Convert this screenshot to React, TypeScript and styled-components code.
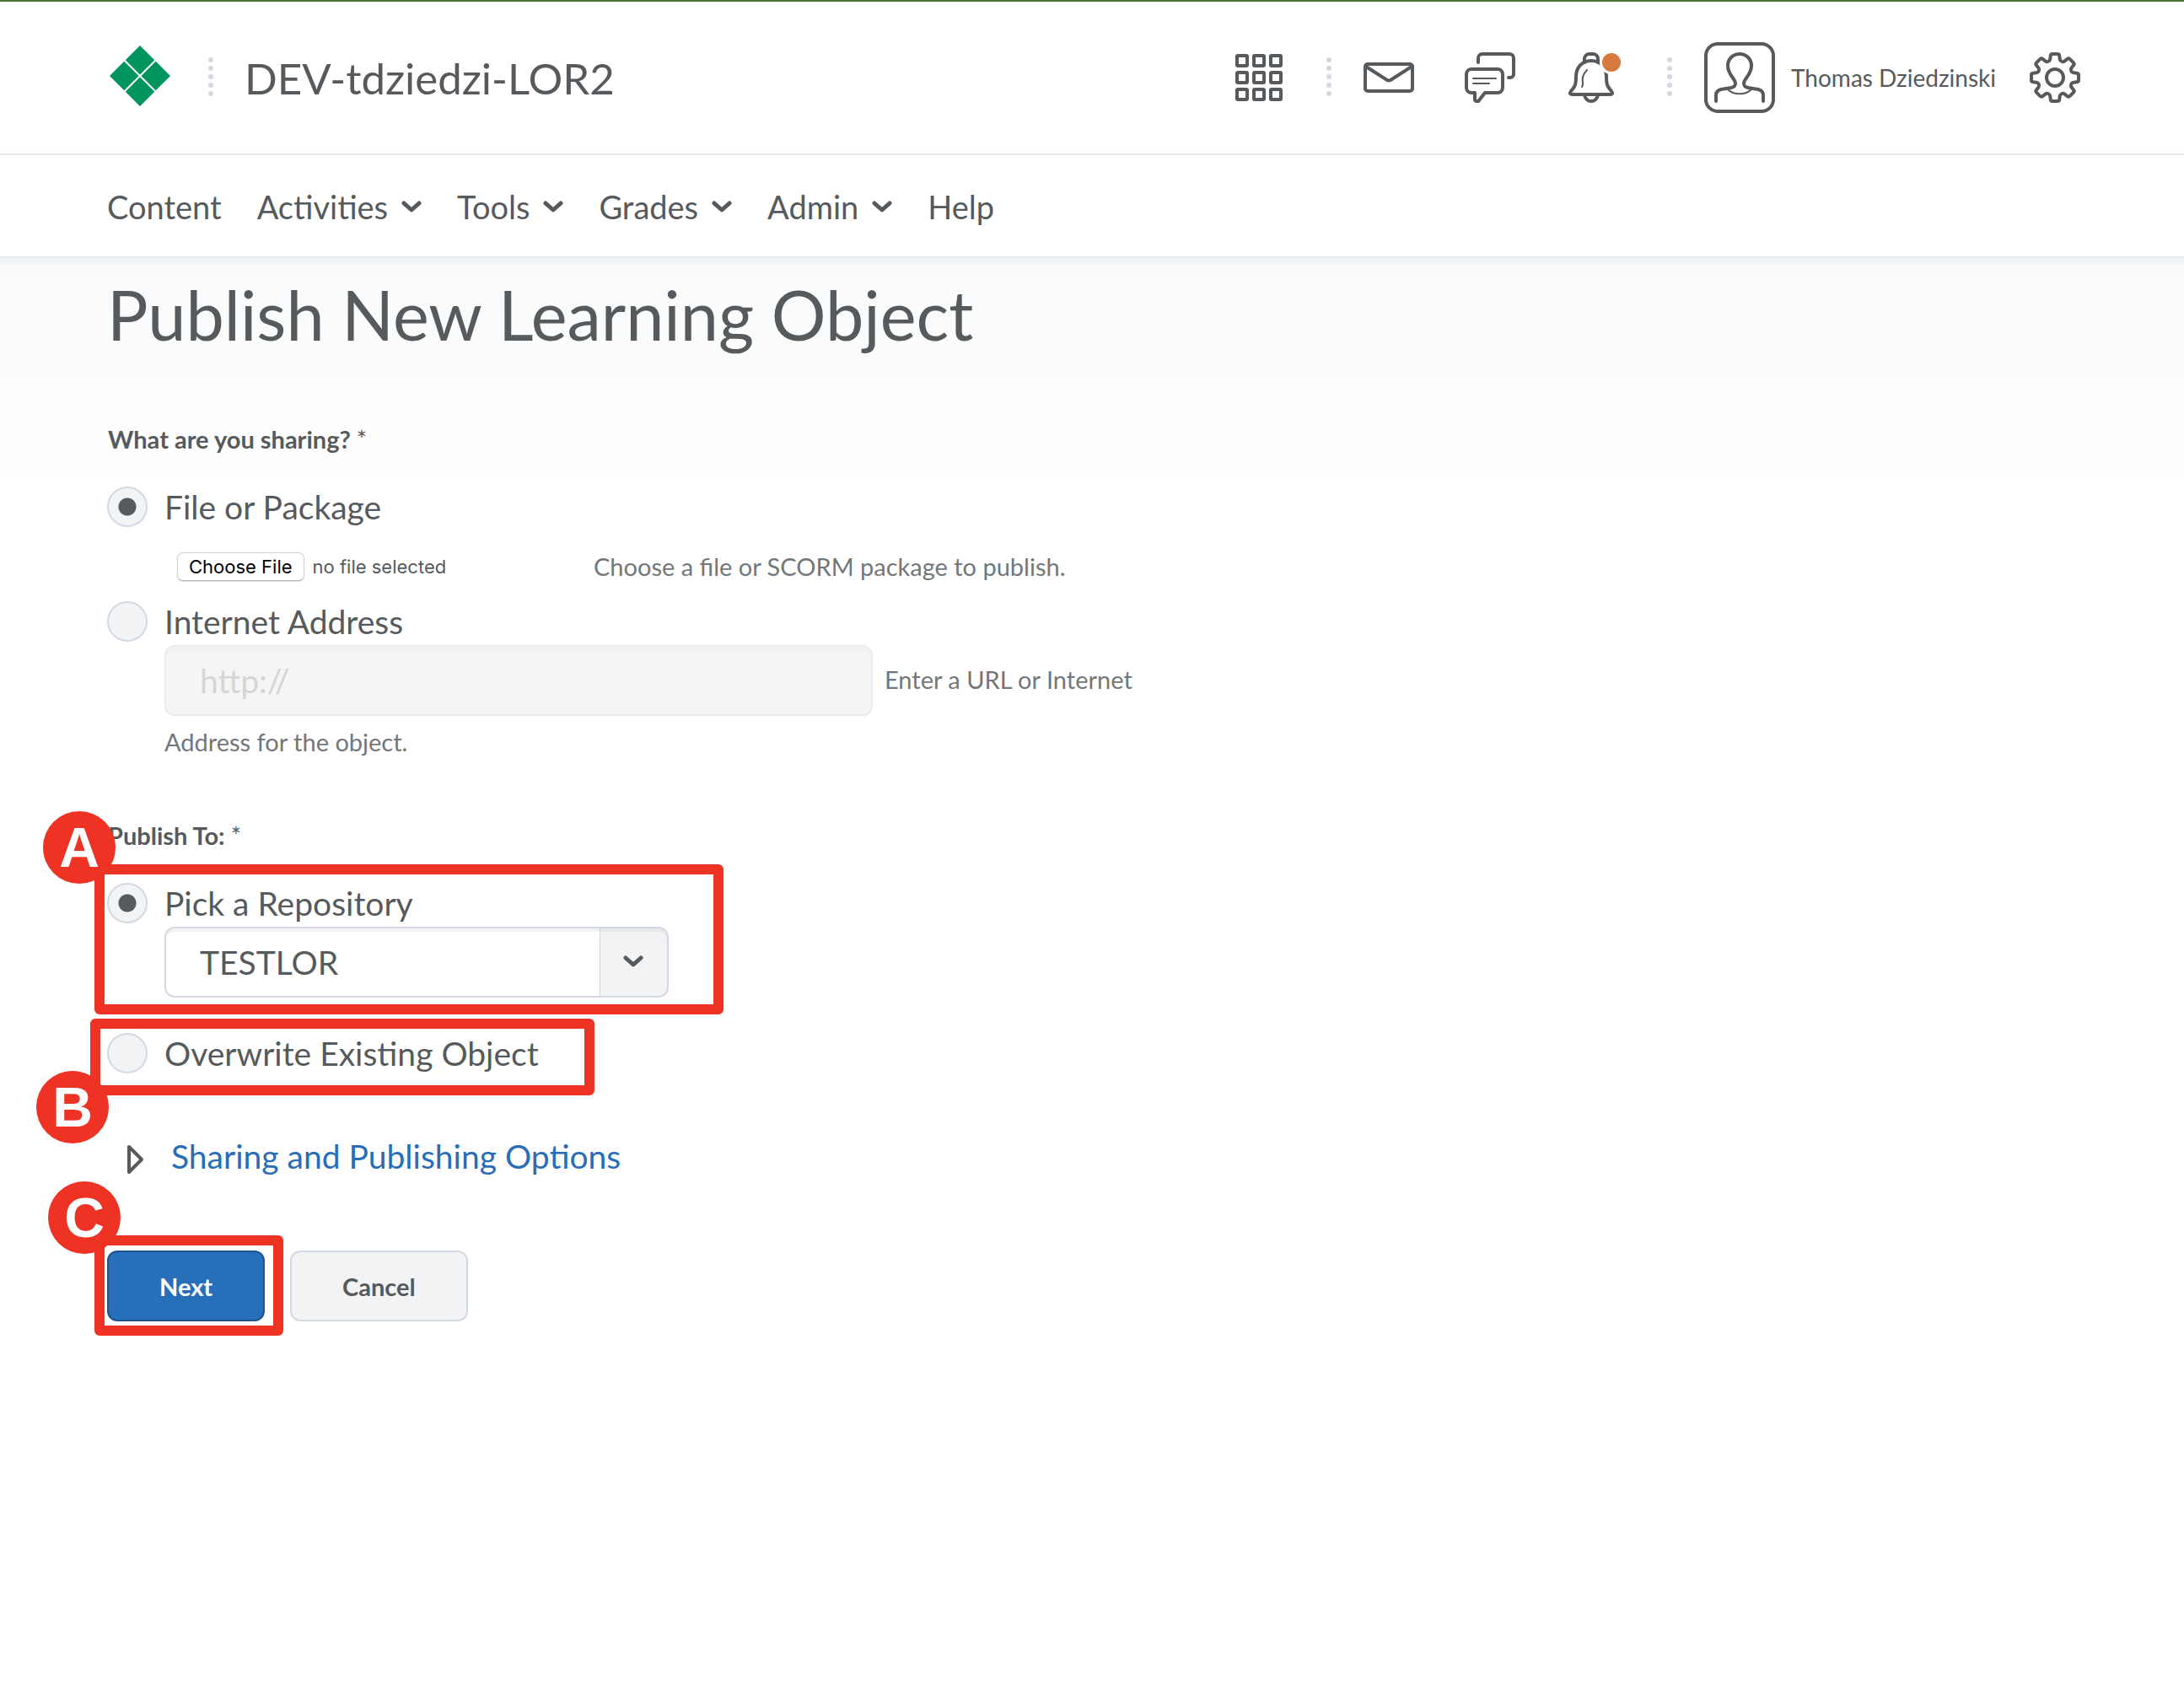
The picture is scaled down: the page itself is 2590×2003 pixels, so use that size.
import React, { useState } from 'react';
import styled, { createGlobalStyle } from 'styled-components';

const color = {
  text: '#565a5c',
  muted: '#72777a',
  line: '#e6eaee',
  border: '#d3d9e3',
  fill: '#f2f3f5',
  blue: '#276db8',
  red: '#ee3224',
};

const Global = createGlobalStyle`
  *, *::before, *::after { box-sizing: border-box; }
  body {
    margin: 0;
    background: #fff;
    color: ${color.text};
    font-family: Lato, "Open Sans", sans-serif;
    font-size: 39px;
  }
  button, input, select { font: inherit; color: inherit; }
  a { color: inherit; text-decoration: none; }
  svg { display: block; flex: none; }
`;

const Page = styled.div`
  min-height: 100vh;
  border-top: 2px solid #46762f;
`;

const Header = styled.header`
  display: flex;
  align-items: center;
  height: 182px;
  padding: 0 123px 0 130px;
  border-bottom: 2px solid ${color.line};
`;

const LogoLink = styled.a`
  display: flex;
  padding-bottom: 4px;
`;

const Dots = styled.span<{ $before: number; $after: number }>`
  display: flex;
  flex-direction: column;
  gap: 4px;
  padding-bottom: 2px;
  margin-left: ${p => p.$before}px;
  margin-right: ${p => p.$after}px;
`;

const Dot = styled.i`
  width: 6px;
  height: 6px;
  border-radius: 50%;
  background: ${color.border};
`;

const SiteName = styled.a`
  padding-top: 2px;
  font-size: 51px;
  line-height: 60px;
`;

const Tools = styled.div`
  display: flex;
  align-items: center;
  margin-left: auto;
`;

const IconGroup = styled.div`
  display: flex;
  gap: 60px;
`;

const IconButton = styled.button`
  display: flex;
  padding: 0;
  border: 0;
  background: none;
`;

const Profile = styled.button`
  display: flex;
  align-items: center;
  gap: 19px;
  margin-right: 40px;
  padding: 0;
  border: 0;
  background: none;
  font-size: 28px;
`;

const Nav = styled.nav`
  display: flex;
  align-items: center;
  gap: 42px;
  height: 122px;
  padding: 2px 127px 0;
  border-bottom: 2px solid ${color.line};
  font-size: 38px;
  line-height: 48px;
`;

const NavItem = styled.a`
  display: flex;
  align-items: center;
  gap: 16px;
`;

const Main = styled.main`
  padding: 8px 127px 80px;
  background: linear-gradient(#f3f4f6 8px, #f9fafb 8px, #fff 300px);
`;

const Title = styled.h1`
  margin: 0 0 69px;
  font-size: 81px;
  line-height: 118px;
  font-weight: 400;
`;

const Group = styled.fieldset`
  min-width: 0;
  margin: 0 0 64px;
  padding: 0;
  border: 0;
`;

const Legend = styled.legend`
  margin-bottom: 36px;
  padding: 0 1px;
  font-size: 29px;
  line-height: 40px;
  font-weight: 700;
`;

const Required = styled.span`
  font-weight: 400;
`;

const RadioLabel = styled.label`
  display: flex;
  align-items: center;
  gap: 20px;
  line-height: 48px;
`;

const Radio = styled.input`
  appearance: none;
  width: 48px;
  height: 48px;
  margin: 0;
  border: 2px solid ${color.border};
  border-radius: 50%;
  background: ${color.fill};
  &:checked {
    background: radial-gradient(circle, ${color.text} 10px, ${color.fill} 11px);
  }
`;

const Indent = styled.div`
  max-width: 1268px;
  padding-left: 68px;
`;

const FileRow = styled(Indent)`
  display: flex;
  align-items: center;
  height: 88px;
  padding-top: 4px;
`;

const FileField = styled.div`
  display: flex;
  align-items: center;
  gap: 10px;
  width: 509px;
  padding-left: 15px;
  padding-top: 2px;
  font-family: Inter, Roboto, sans-serif;
  font-size: 22px;
`;

const HiddenFile = styled.input`
  position: absolute;
  width: 1px;
  height: 1px;
  opacity: 0;
`;

const FileButton = styled.label`
  padding: 0 13px;
  border: 1px solid #d0d0d0;
  border-bottom-color: #b4b4b4;
  border-radius: 7px;
  background: #fff;
  box-shadow: 0 1px 1px rgba(0, 0, 0, 0.12);
  color: #000;
  line-height: 32px;
`;

const Hint = styled.label`
  color: ${color.muted};
  font-size: 29px;
`;

const UrlRow = styled(Indent)`
  padding-top: 4px;
  line-height: 54px;
`;

const UrlInput = styled.input`
  width: 840px;
  height: 84px;
  margin-right: 14px;
  padding: 0 40px;
  vertical-align: middle;
  border: 2px solid #e8ecf0;
  border-radius: 12px;
  background: #f6f5f3;
  box-shadow: inset 0 4px 0 #f1f1f0;
  &::placeholder { color: #d3d6d8; opacity: 1; }
`;

const Marked = styled.div`
  position: relative;
  & + & { margin-top: 42px; }
`;

const SelectRow = styled(Indent)`
  padding-top: 4px;
`;

const SelectBox = styled.div`
  position: relative;
  width: 598px;
  svg {
    position: absolute;
    right: 30px;
    top: 34px;
    pointer-events: none;
  }
`;

const Select = styled.select`
  display: block;
  appearance: none;
  width: 100%;
  height: 84px;
  padding: 0 100px 0 40px;
  border: 2px solid ${color.border};
  border-radius: 12px;
  background: linear-gradient(to left, ${color.fill} 79px, ${color.border} 79px, ${color.border} 80px, #fff 80px);
  box-shadow: inset 0 4px 0 rgba(86, 90, 92, 0.08);
`;

const Frame = styled.span<{ $left: number; $top: number; $width: number; $height: number }>`
  position: absolute;
  left: ${p => p.$left}px;
  top: ${p => p.$top}px;
  width: ${p => p.$width}px;
  height: ${p => p.$height}px;
  border: 12px solid ${color.red};
  border-radius: 6px;
  pointer-events: none;
`;

const Badge = styled.span<{ $left: number; $top: number }>`
  position: absolute;
  left: ${p => p.$left}px;
  top: ${p => p.$top}px;
  display: flex;
  align-items: center;
  justify-content: center;
  width: 86px;
  height: 86px;
  border-radius: 50%;
  background: ${color.red};
  color: #fff;
  font: 700 66px "Liberation Sans", Arial, sans-serif;
`;

const OptionsLink = styled.a`
  display: inline-flex;
  align-items: center;
  gap: 32px;
  margin: 10px 0 88px;
  padding-left: 24px;
  color: ${color.blue};
  line-height: 48px;
  svg { margin-top: 8px; }
`;

const Actions = styled.div`
  position: relative;
  display: flex;
  gap: 30px;
`;

const Button = styled.button<{ $primary?: boolean }>`
  height: 84px;
  padding: 0 60px;
  border: 2px solid ${p => (p.$primary ? '#1c5590' : color.border)};
  border-radius: 12px;
  background: ${p => (p.$primary ? '#286fb9' : color.fill)};
  color: ${p => (p.$primary ? '#fff' : color.text)};
  font-size: 29px;
  font-weight: 700;
`;

const line = {
  fill: 'none',
  stroke: color.text,
  strokeWidth: 4,
  strokeLinecap: 'round' as const,
  strokeLinejoin: 'round' as const,
};

const Separator = ({ before, after }: { before: number; after: number }) => (
  <Dots $before={before} $after={after}>
    <Dot /><Dot /><Dot /><Dot /><Dot />
  </Dots>
);

const Logo = () => (
  <svg width="72" height="72" viewBox="0 0 72 72">
    <path d="M36 0 72 36 36 72 0 36z" fill="#00955e" />
    <path d="M17 17 55 55M55 17 17 55" stroke="#fff" strokeWidth="2" />
  </svg>
);

const Chevron = () => (
  <svg width="24" height="14" viewBox="0 0 24 14" {...line} strokeWidth={5}>
    <path d="M3 3l9 8 9-8" />
  </svg>
);

const GridIcon = () => (
  <svg width="60" height="60" viewBox="0 0 60 60" {...line}>
    {[4, 24, 44].map(y => [4, 24, 44].map(x => (
      <rect key={`${x}-${y}`} x={x} y={y} width="12" height="12" rx="1" />
    )))}
  </svg>
);

const MailIcon = () => (
  <svg width="60" height="60" viewBox="0 0 60 60" {...line}>
    <rect x="2" y="14" width="56" height="32" rx="3" />
    <path d="M3 17 28 33q2 1 4 0L57 17" />
  </svg>
);

const ChatIcon = () => (
  <svg width="60" height="60" viewBox="0 0 60 60" {...line}>
    <path d="M16 12V7a5 5 0 0 1 5-5h32a5 5 0 0 1 5 5v19a4 4 0 0 1-4 4h-2" />
    <path d="M8 20h31a6 6 0 0 1 6 6v16a6 6 0 0 1-6 6H24l-7 9c-1 2-5 1-5-1v-8H8a6 6 0 0 1-6-6V26a6 6 0 0 1 6-6z" />
    <path d="M10 31h27M10 37h19" strokeWidth="2" />
  </svg>
);

const BellIcon = () => (
  <svg width="60" height="60" viewBox="0 0 60 60" overflow="visible" {...line}>
    <path d="M22 12V8a6 6 0 0 1 6-6h4a6 6 0 0 1 6 6v4" />
    <path d="M30 10C19 10 12 18 12 29c0 11-2 12-6 17-2 3-1 4 1 4h46c2 0 3-1 1-4-4-5-6-6-6-17 0-11-7-19-18-19z" />
    <path d="M25 21c-5 5-6 10-5 15 0 2 0 4-1 5" strokeWidth="2" />
    <path d="M22 51c1 4 4 7 8 7s7-3 8-7" />
    <circle cx="54" cy="12" r="14" fill="#fff" stroke="none" />
    <circle cx="54" cy="12" r="11" fill="#d87a40" stroke="none" />
  </svg>
);

const AvatarIcon = () => (
  <svg width="84" height="84" viewBox="0 0 84 84" {...line}>
    <rect x="2" y="2" width="80" height="80" rx="14" />
    <path d="M14 70v-7c0-4 2-6 6-7l12-2c4-1 5-2 5-5 0-6-9-10-9-21 0-8 6-14 14-14s14 6 14 14c0 11-9 15-9 21 0 3 1 4 5 5l12 2c4 1 6 3 6 7v7" />
    <path d="M28 56c7 7 21 7 28 0" strokeWidth="2" />
  </svg>
);

const gearPath = () => {
  const tooth = [[-6, -20], [-5, -28], [5, -28], [6, -20]];
  const points = Array.from({ length: 8 }).flatMap((_, i) => {
    const a = (i * Math.PI) / 4;
    return tooth.map(([x, y]) => [
      30 + x * Math.cos(a) - y * Math.sin(a),
      30 + x * Math.sin(a) + y * Math.cos(a),
    ]);
  });
  const toward = (from: number[], to: number[]) => {
    const d = Math.hypot(to[0] - from[0], to[1] - from[1]);
    const t = Math.min(2, d / 2) / d;
    return `${from[0] + (to[0] - from[0]) * t} ${from[1] + (to[1] - from[1]) * t}`;
  };
  return points
    .map((p, i) => {
      const prev = points[(i + points.length - 1) % points.length];
      const next = points[(i + 1) % points.length];
      return `${i ? 'L' : 'M'}${toward(p, prev)}Q${p[0]} ${p[1]} ${toward(p, next)}`;
    })
    .join('') + 'z';
};

const GearIcon = () => (
  <svg width="60" height="60" viewBox="0 0 60 60" {...line}>
    <path d={gearPath()} />
    <circle cx="30" cy="30" r="10" />
  </svg>
);

const navItems = [
  { label: 'Content', menu: false },
  { label: 'Activities', menu: true },
  { label: 'Tools', menu: true },
  { label: 'Grades', menu: true },
  { label: 'Admin', menu: true },
  { label: 'Help', menu: false },
];

export default function App() {
  const [source, setSource] = useState('file');
  const [target, setTarget] = useState('repository');

  return (
    <Page>
      <Global />
      <Header>
        <LogoLink href="#" aria-label="Home"><Logo /></LogoLink>
        <Separator before={45} after={37} />
        <SiteName href="#">DEV-tdziedzi-LOR2</SiteName>
        <Tools>
          <IconButton aria-label="Courses"><GridIcon /></IconButton>
          <Separator before={50} after={38} />
          <IconGroup>
            <IconButton aria-label="Messages"><MailIcon /></IconButton>
            <IconButton aria-label="Subscriptions"><ChatIcon /></IconButton>
            <IconButton aria-label="Notifications"><BellIcon /></IconButton>
          </IconGroup>
          <Separator before={60} after={38} />
          <Profile><AvatarIcon />Thomas Dziedzinski</Profile>
          <IconButton aria-label="Settings"><GearIcon /></IconButton>
        </Tools>
      </Header>
      <Nav>
        {navItems.map(item => (
          <NavItem key={item.label} href="#">
            {item.label}
            {item.menu && <Chevron />}
          </NavItem>
        ))}
      </Nav>
      <Main>
        <Title>Publish New Learning Object</Title>

        <Group>
          <Legend>What are you sharing? <Required>*</Required></Legend>
          <RadioLabel>
            <Radio type="radio" name="source" checked={source === 'file'} onChange={() => setSource('file')} />
            File or Package
          </RadioLabel>
          <FileRow>
            <FileField>
              <HiddenFile type="file" id="file" />
              <FileButton htmlFor="file">Choose File</FileButton>
              <span>no file selected</span>
            </FileField>
            <Hint htmlFor="file">Choose a file or SCORM package to publish.</Hint>
          </FileRow>
          <RadioLabel>
            <Radio type="radio" name="source" checked={source === 'url'} onChange={() => setSource('url')} />
            Internet Address
          </RadioLabel>
          <UrlRow>
            <UrlInput id="url" type="text" placeholder="http://" disabled={source !== 'url'} />
            <Hint htmlFor="url">Enter a URL or Internet Address for the object.</Hint>
          </UrlRow>
        </Group>

        <Group>
          <Legend>Publish To: <Required>*</Required></Legend>
          <Marked>
            <RadioLabel>
              <Radio type="radio" name="target" checked={target === 'repository'} onChange={() => setTarget('repository')} />
              Pick a Repository
            </RadioLabel>
            <SelectRow>
              <SelectBox>
                <Select aria-label="Repository" defaultValue="TESTLOR">
                  <option>TESTLOR</option>
                </Select>
                <Chevron />
              </SelectBox>
            </SelectRow>
            <Frame $left={-15} $top={-22} $width={746} $height={178} />
            <Badge $left={-76} $top={-85}>A</Badge>
          </Marked>
          <Marked>
            <RadioLabel>
              <Radio type="radio" name="target" checked={target === 'overwrite'} onChange={() => setTarget('overwrite')} />
              Overwrite Existing Object
            </RadioLabel>
            <Frame $left={-20} $top={-17} $width={598} $height={91} />
            <Badge $left={-84} $top={45}>B</Badge>
          </Marked>
        </Group>

        <OptionsLink href="#">
          <svg width="20" height="36" viewBox="0 0 20 36" {...line}>
            <path d="M2 3v30l15-15z" />
          </svg>
          Sharing and Publishing Options
        </OptionsLink>

        <Actions>
          <Button $primary>Next</Button>
          <Button>Cancel</Button>
          <Frame $left={-15} $top={-18} $width={224} $height={119} />
          <Badge $left={-70} $top={-82}>C</Badge>
        </Actions>
      </Main>
    </Page>
  );
}
